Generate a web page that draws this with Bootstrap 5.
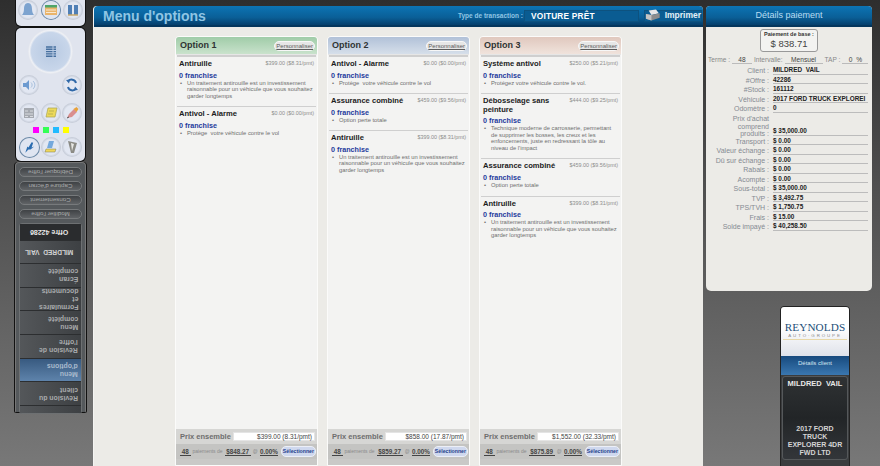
<!DOCTYPE html>
<html lang="fr">
<head>
<meta charset="UTF-8" />
<meta name="viewport" content="width=device-width, initial-scale=1" />
<title>Menu d'options</title>
<link rel="stylesheet" href="https://cdn.jsdelivr.net/npm/bootstrap@5.3.0/dist/css/bootstrap.min.css" />
<style>
  html, body { height: 466px; overflow: hidden; }
  body { background: linear-gradient(180deg, #2e2e2e 0, #4f4f4f 40%, #787878 100%); font-family: "Liberation Sans", Arial, sans-serif; }
  .page-wrap { width: 880px; height: 466px; overflow: hidden; }

  /* left rail */
  .rail { width: 71px; margin-left: 15px; margin-right: 7px; flex: none; }
  .rail-top { height: 26px; background: #e0e4ee; border-radius: 0 0 5px 5px; margin: 0 1px 2px; padding: 0 2px; box-shadow: 0 0 0 1px #111; }
  .rail-tools { height: 133px; background: #e0e4ee; border-radius: 5px; margin: 0 1px; padding: 1px 2px 0; box-shadow: 0 0 0 1px #111; }
  .ring { width: 20px; height: 20px; border-radius: 50%; background: radial-gradient(circle, #e2e7f2 52%, #c6ccd8 68%, #b4bbc8 88%, #eceef3 100%); flex: none; }
  .ring svg { display: block; width: 100%; height: 100%; }
  .ring-on { background: radial-gradient(circle, #dfe5f1 60%, #5f7f9f 68%, #4f6f91 88%, #c9d1dd 100%); }
  .ring-big { width: 45px; height: 45px; background: radial-gradient(circle, #b7c9e2 0, #c8d6ea 60%, #eef0f5 66%, #c6cbd6 84%, #f2f3f6 94%, #c9ccd3 100%); }
  .swatch { width: 6px; height: 6px; }
  .rail-dark { height: 251px; margin-top: 1px; padding: 4px 3px 3px; background: #55595c; border: 1px solid #777; border-bottom: 1px solid #111; box-shadow: 1px 0 0 #111, -1px 0 0 #111; border-radius: 4px 4px 2px 2px; }
  .pill-btn { height: 10px; margin-bottom: 4px; border-radius: 5px; background: linear-gradient(0deg, #606366, #3f4245); border: 1px solid #777a7c; color: #a9abac; font-size: 6.2px; line-height: 8px; text-align: center; white-space: nowrap; }
  .pill-btn span, .nav-cell span { display: block; transform: rotate(180deg); }
  .nav-stack { margin-top: 1px; background: #46494c; border-radius: 3px; border: 1px solid #6d7072; }
  .nav-cell { border-bottom: 1px solid #2c2e30; background: linear-gradient(90deg, #54575a, #3d4043); color: #a8aaac; font-size: 6.9px; font-weight: bold; line-height: 8px; padding: 0 3px 0 2px; display: flex; align-items: center; white-space: nowrap; }
  .nav-cell span { margin-left: auto; }
  .nav-offer { height: 17px; background: #2a2c2e; color: #e6e6e6; font-size: 7px; }
  .nav-offer span { margin-right: 10px; }
  .nav-name { height: 23px; color: #d2d2d2; font-size: 6.6px; }
  .nav-name span { margin-right: 5px; }
  .nav-h24 { height: 23.7px; }
  .nav-active { background: linear-gradient(180deg, #385a80, #5e83ab); color: #a9bacd; }
  .nav-end { height: 7px; border-bottom: 0; }

  /* main panel */
  .main-panel { width: 610px; flex: none; margin-top: 6px; background: #ecebe7; border-left: 1px solid #f4f4f2; border-radius: 4px 4px 0 0; }
  .blue-bar { height: 21px; border-radius: 4px 4px 0 0; background: linear-gradient(180deg, #0c74b4 0, #0a5f97 60%, #053f6c 100%); border-bottom: 2px solid #04365d; }
  .bar-title { margin-left: 9px; color: #8fc5e4; font-size: 14px; font-weight: bold; line-height: 20px; width: 355px; }
  .bar-type { color: #8fc5e4; font-size: 6.5px; font-weight: bold; width: 66px; white-space: nowrap; }
  .bar-field { width: 115px; height: 12px; border: 1px solid #0d527f; background: #0a5c92; color: #fff; font-size: 8.3px; font-weight: bold; letter-spacing: .2px; line-height: 10px; padding-left: 6px; margin-right: 5px; }
  .bar-print { width: 58px; height: 12px; border: 1px solid #0d527f; background: #0a5c92; color: #e4f0f7; font-size: 8.5px; font-weight: bold; }

  .option-wrap { padding: 9px 0 0 81px; gap: 9px; }
  .opt-col { width: 143px; height: 430px; background: #f3f3f2; border: 1px solid #fbfbfa; border-radius: 4px 4px 0 0; }
  .opt-head { height: 18px; padding: 0 2px 0 4px; border-bottom: 1px solid #e6e6e6; border-radius: 3px 3px 0 0; }
  .head-green { background: linear-gradient(180deg, #a0cca8, #c9e2cc); }
  .head-blue { background: linear-gradient(180deg, #b1c1d8, #d6dfea); }
  .head-rose { background: linear-gradient(180deg, #e0c8be, #f0e3dc); }
  .opt-title { font-size: 9px; font-weight: bold; color: #2f3333; }
  .btn-perso { font-size: 6px; color: #5c5c5c; background: #e6e6e6; border: 1px solid #f7f7f7; border-radius: 5px; padding: 0 1px; line-height: 8px; text-decoration: underline; }
  .opt-list { flex: 1 1 auto; }
  .opt-item { border-top: 1px solid #cfcfcf; margin: 0 1px; padding: 2px 2px 7px; }
  .opt-list .opt-item:first-child { border-top-width: 2px; }
  .item-name { font-size: 7.6px; line-height: 8.5px; font-weight: bold; color: #1c1c1c; max-width: 82px; padding-top: 1px; }
  .item-price { font-size: 5.4px; color: #8c8c8c; white-space: nowrap; line-height: 9px; }
  .item-fr { font-size: 7.2px; font-weight: bold; color: #1f3a9c; line-height: 8px; margin-top: 3px; }
  .item-txt { font-size: 5.8px; color: #6e6e6e; line-height: 6.6px; margin: 0; padding: 0 1px 0 8px; position: relative; }
  .item-txt::before { content: "•"; position: absolute; left: 1px; }
  .opt-foot { flex: none; height: 36px; background: #c9c9c7; }
  .foot-top { height: 15px; background: #d6d6d4; padding: 0 2px 0 4px; }
  .foot-label { font-size: 7.5px; font-weight: bold; color: #6e6e6e; white-space: nowrap; width: 53px; }
  .foot-val { flex: 1 1 auto; height: 9px; background: #fff; border: 1px solid #e4e4e4; font-size: 6.5px; line-height: 7px; color: #444; text-align: right; padding-right: 2px; white-space: nowrap; }
  .foot-pay { height: 15px; background: #c4c4c2; padding: 0 1px 0 4px; font-size: 5px; color: #8a8a8a; white-space: nowrap; gap: 2px; }
  .foot-pay b { color: #444; font-size: 6.3px; font-weight: bold; border-bottom: 1px solid #444; line-height: 7px; }
  .btn-pick { margin-left: auto; font-size: 5.2px; font-weight: bold; color: #24408c; background: #cfd8ee; border: 1px solid #eceff7; border-radius: 5px; padding: 0 1px; line-height: 9px; }

  /* right panel */
  .right-col { width: 166px; flex: none; margin-left: 3px; }
  .pay-panel { margin-top: 6px; height: 285px; flex: none; background: #ecebe7; border-radius: 4px 4px 5px 5px; }
  .pay-head { height: 21px; background: linear-gradient(180deg, #0c74b4 0, #0a5f97 60%, #053f6c 100%); border-bottom: 2px solid #04365d; border-radius: 4px 4px 0 0; color: #b9ddf2; font-size: 9px; line-height: 19px; text-align: center; }
  .base-box { width: 58px; height: 23px; margin: 2px auto 3px; border: 1px solid #999; border-radius: 3px; background: #f3f3f1; text-align: center; color: #333; }
  .base-box div { font-size: 5.5px; font-weight: bold; line-height: 7px; padding-top: 1px; }
  .base-box p { font-size: 9.5px; line-height: 11px; margin: 0; color: #444; }
  .term-row { font-size: 6.6px; color: #888; white-space: nowrap; padding-left: 2px; height: 10px; gap: 2px; }
  .term-row b { font-weight: normal; color: #444; border-bottom: 1px solid #bbb; text-align: center; display: block; line-height: 7px; }
  .pay-row { display: flex; align-items: flex-end; height: 9.5px; }
  .pay-lab { width: 67px; text-align: right; font-size: 7px; color: #858a92; line-height: 7.5px; padding-right: 4px; flex: none; white-space: nowrap; }
  .pay-val { width: 95px; flex: none; font-size: 6.4px; line-height: 7.4px; font-weight: bold; color: #222; border-bottom: 1px solid #bcbcbc; white-space: nowrap; }
  .pay-tall { height: 23px; }
  .pay-tall .pay-lab { margin-bottom: -2px; }

  .client-box { width: 70px; margin: 15px 0 0 74px; height: 170px; background: #3a3c3e; border-radius: 4px 4px 0 0; border: 1px solid #222; flex: none; }
  .logo-area { height: 49px; background: linear-gradient(180deg, #fff 40%, #dfe2ea 100%); text-align: center; border-radius: 3px 3px 0 0; padding-top: 15px; }
  .logo-name { font-family: "Liberation Serif", serif; font-size: 11.2px; line-height: 11px; color: #1d4f79; letter-spacing: .1px; }
  .logo-sub { font-size: 4.4px; line-height: 6px; color: #8a8a8a; letter-spacing: 1.9px; border-bottom: 1px solid #e8d8a8; margin: 0 2px; white-space: nowrap; }
  .detail-head { height: 19px; background: linear-gradient(180deg, #174a7e, #3a77b0); color: #d6e4f0; font-size: 6px; text-align: center; line-height: 15px; }
  .client-card { height: 84px; margin: 1px 1px 0; background: linear-gradient(180deg, #2f3234, #222527 50%, #33363a 100%); border: 1px solid #55585a; border-radius: 3px; color: #e6e6e6; font-weight: bold; text-align: center; }
  .client-name { font-size: 7.5px; line-height: 10px; padding-top: 2px; color: #e8e8e8; white-space: nowrap; }
  .client-car { font-size: 7px; line-height: 8px; padding-top: 36px; color: #d4d4d4; white-space: nowrap; }
</style>
</head>
<body>
<div class="page-wrap d-flex">

  <!-- left rail -->
  <div class="rail">
    <div class="rail-top d-flex justify-content-between align-items-start">
      <div class="ring"><svg viewBox="0 0 20 20"><path d="M10 3c-3 0-4 3-4 6 0 3-1 5-2 6h12c-1-1-2-3-2-6 0-3-1-6-4-6z" fill="#7da3cf" /></svg></div>
      <div class="ring ring-on"><svg viewBox="0 0 20 20"><rect x="4" y="5" width="12" height="10" fill="#e9b46b" /><rect x="4" y="5" width="12" height="2.5" fill="#4fa56a" /><path d="M5 10h10M5 12.5h10" stroke="#fff" stroke-width=".7" /></svg></div>
      <div class="ring"><svg viewBox="0 0 20 20"><path d="M5 5h4v10H5zM11 5h4v10h-4z" fill="#4f7fb5" /><path d="M5 15h10" stroke="#c9a86a" stroke-width="1.5" /></svg></div>
    </div>
    <div class="rail-tools">
      <div class="d-flex justify-content-center"><div class="ring ring-big"><svg viewBox="0 0 45 45"><path d="M18 18h6.500M18 20.300h6.500M18 22.600h6.500M18 24.900h6.500M18 27.200h6.500M25.500 18h2.500M25.500 20.300h2.500M25.500 22.600h2.500M25.500 24.900h2.500M25.500 27.200h2.500" stroke="#47709f" stroke-width="1.4" /></svg></div></div>
      <div class="d-flex justify-content-between" style="padding:0 1px;margin-top:1px">
        <div class="ring"><svg viewBox="0 0 20 20"><path d="M4 8h3l3-3v10l-3-3H4z" fill="#6c9ad0" /><path d="M12 7.500c1.500 1.500 1.500 3.500 0 5M14 6c2.500 2.500 2.500 5.500 0 8" stroke="#a8c0dd" fill="none" /></svg></div>
        <div class="ring"><svg viewBox="0 0 20 20"><path d="M14 8a4.500 4.500 0 0 0-8-1.500M6 12a4.500 4.500 0 0 0 8 1.500" stroke="#2f68a8" stroke-width="2" fill="none" /><path d="M4 5l4-.5-1 4zM16 15l-4 .5 1-4z" fill="#2f68a8" /></svg></div>
      </div>
      <div class="d-flex justify-content-between" style="padding:0 1px;margin-top:8px">
        <div class="ring"><svg viewBox="0 0 20 20"><rect x="5" y="5" width="10" height="10" fill="#a5a9b0" /><path d="M6 8h3M11 8h3M6 11h8M6 13.500h3M11 13.500h3" stroke="#e6e8ec" stroke-width=".8" /></svg></div>
        <div class="ring"><svg viewBox="0 0 20 20"><path d="M7 5h9l-2 9H5z" fill="#ecd95a" stroke="#a9a552" stroke-width=".7" /><path d="M8 8h5M7 11h5" stroke="#a9a552" stroke-width=".7" /></svg></div>
        <div class="ring"><svg viewBox="0 0 20 20"><path d="M5 15l2-4 5-5 3 3-5 5z" fill="#d98f8f" /><path d="M11.500 6l3-2 2 2-2 3z" fill="#e8a23a" /><path d="M5 15l2-1" stroke="#555" /></svg></div>
      </div>
      <div class="d-flex justify-content-center gap-1" style="margin-top:4px">
        <div class="swatch" style="background:#f0f"></div>
        <div class="swatch" style="background:#3f5"></div>
        <div class="swatch" style="background:#2bf"></div>
        <div class="swatch" style="background:#ff0"></div>
      </div>
      <div class="d-flex justify-content-between" style="margin-top:4px;padding:0 1px">
        <div class="ring ring-on" style="width:21px;height:21px"><svg viewBox="0 0 20 20"><path d="M6 15l2-6 1 1 3-5 1.500.5-1.500 4.500 2.500-1-3.500 3-2 0z" fill="#2a6cb0" /></svg></div>
        <div class="ring"><svg viewBox="0 0 20 20"><path d="M8 4h5l-2 7H6z" fill="#74a8dc" /><path d="M5 12h10l-1 3H4z" fill="#f0d75a" stroke="#7a7a5a" stroke-width=".5" /></svg></div>
        <div class="ring"><svg viewBox="0 0 20 20"><path d="M6 4l9 2-3 10H9z" fill="#8b8b85" /><path d="M9 6l3 1-2 7z" fill="#e8e8e4" /></svg></div>
      </div>
    </div>
    <div class="rail-dark">
      <div class="pill-btn"><span>Débloquer l'offre</span></div>
      <div class="pill-btn"><span>Capture d'écran</span></div>
      <div class="pill-btn"><span>Consentement</span></div>
      <div class="pill-btn"><span>Modifier l'offre</span></div>
      <div class="nav-stack">
        <div class="nav-cell nav-offer"><span>Offre 42286</span></div>
        <div class="nav-cell nav-name"><span>MILDRED&nbsp; VAIL</span></div>
        <div class="nav-cell nav-h24"><span>Écran<br>complété</span></div>
        <div class="nav-cell nav-h24"><span>Formulaires<br>et<br>documents</span></div>
        <div class="nav-cell nav-h24"><span>Menu<br>complété</span></div>
        <div class="nav-cell nav-h24"><span>Révision de<br>l'offre</span></div>
        <div class="nav-cell nav-h24 nav-active"><span>Menu<br>d'options</span></div>
        <div class="nav-cell nav-h24"><span>Révision du<br>client</span></div>
        <div class="nav-cell nav-end"></div>
      </div>
    </div>
  </div>

  <!-- main -->
  <div class="main-panel">
    <div class="blue-bar d-flex align-items-center">
      <div class="bar-title">Menu d'options</div>
      <div class="bar-type">Type de transaction :</div>
      <div class="bar-field">VOITURE PRÊT</div>
      <div class="bar-print d-flex align-items-center gap-1">
        <svg width="17" height="13" viewBox="0 0 17 13"><path d="M4 1l8-1 3 4-8 2z" fill="#e8e8e8" /><path d="M1 5l6 1 9-2v5l-9 3-6-2z" fill="#8d8d8d" /><path d="M1 5l6 1v6l-6-2z" fill="#c4c4c4" /></svg>
        <span>Imprimer</span>
      </div>
    </div>

    <div class="option-wrap d-flex">
      <!-- option 1 -->
      <div class="opt-col d-flex flex-column">
        <div class="opt-head head-green d-flex justify-content-between align-items-center">
          <span class="opt-title">Option 1</span><span class="btn-perso">Personnaliser</span>
        </div>
        <div class="opt-list">
          <div class="opt-item">
            <div class="d-flex justify-content-between"><div class="item-name">Antiruille</div><div class="item-price">$399.00 ($8.31/pmt)</div></div>
            <div class="item-fr">0 franchise</div>
            <div class="item-txt">Un traitement antirouille est un investissement raisonnable pour un véhicule que vous souhaitez garder longtemps</div>
          </div>
          <div class="opt-item">
            <div class="d-flex justify-content-between"><div class="item-name">Antivol - Alarme</div><div class="item-price">$0.00 ($0.00/pmt)</div></div>
            <div class="item-fr">0 franchise</div>
            <div class="item-txt">Protège&nbsp; votre véhicule contre le vol</div>
          </div>
        </div>
        <div class="opt-foot">
          <div class="foot-top d-flex align-items-center"><span class="foot-label">Prix ensemble</span><span class="foot-val">$399.00 (8.31/pmt)</span></div>
          <div class="foot-pay d-flex align-items-center"><b>&nbsp;48&nbsp;</b><span>paiements de</span><b>&nbsp;$848.27&nbsp;</b><span>@</span><b>0.00%</b><span class="btn-pick">Sélectionner</span></div>
        </div>
      </div>

      <!-- option 2 -->
      <div class="opt-col d-flex flex-column">
        <div class="opt-head head-blue d-flex justify-content-between align-items-center">
          <span class="opt-title">Option 2</span><span class="btn-perso">Personnaliser</span>
        </div>
        <div class="opt-list">
          <div class="opt-item">
            <div class="d-flex justify-content-between"><div class="item-name">Antivol - Alarme</div><div class="item-price">$0.00 ($0.00/pmt)</div></div>
            <div class="item-fr">0 franchise</div>
            <div class="item-txt">Protège&nbsp; votre véhicule contre le vol</div>
          </div>
          <div class="opt-item">
            <div class="d-flex justify-content-between"><div class="item-name">Assurance combiné</div><div class="item-price">$459.00 ($9.56/pmt)</div></div>
            <div class="item-fr">0 franchise</div>
            <div class="item-txt">Option perte totale</div>
          </div>
          <div class="opt-item">
            <div class="d-flex justify-content-between"><div class="item-name">Antiruille</div><div class="item-price">$399.00 ($8.31/pmt)</div></div>
            <div class="item-fr">0 franchise</div>
            <div class="item-txt">Un traitement antirouille est un investissement raisonnable pour un véhicule que vous souhaitez garder longtemps</div>
          </div>
        </div>
        <div class="opt-foot">
          <div class="foot-top d-flex align-items-center"><span class="foot-label">Prix ensemble</span><span class="foot-val">$858.00 (17.87/pmt)</span></div>
          <div class="foot-pay d-flex align-items-center"><b>&nbsp;48&nbsp;</b><span>paiements de</span><b>&nbsp;$859.27&nbsp;</b><span>@</span><b>0.00%</b><span class="btn-pick">Sélectionner</span></div>
        </div>
      </div>

      <!-- option 3 -->
      <div class="opt-col d-flex flex-column">
        <div class="opt-head head-rose d-flex justify-content-between align-items-center">
          <span class="opt-title">Option 3</span><span class="btn-perso">Personnaliser</span>
        </div>
        <div class="opt-list">
          <div class="opt-item">
            <div class="d-flex justify-content-between"><div class="item-name">Système antivol</div><div class="item-price">$250.00 ($5.21/pmt)</div></div>
            <div class="item-fr">0 franchise</div>
            <div class="item-txt">Protégez votre véhicule contre le vol.</div>
          </div>
          <div class="opt-item">
            <div class="d-flex justify-content-between"><div class="item-name">Débosselage sans peinture</div><div class="item-price">$444.00 ($9.25/pmt)</div></div>
            <div class="item-fr">0 franchise</div>
            <div class="item-txt">Technique moderne de carrosserie, permettant de supprimer les bosses, les creux et les enfoncements, juste en redressant la tôle au niveau de l'impact</div>
          </div>
          <div class="opt-item">
            <div class="d-flex justify-content-between"><div class="item-name">Assurance combiné</div><div class="item-price">$459.00 ($9.56/pmt)</div></div>
            <div class="item-fr">0 franchise</div>
            <div class="item-txt">Option perte totale</div>
          </div>
          <div class="opt-item">
            <div class="d-flex justify-content-between"><div class="item-name">Antiruille</div><div class="item-price">$399.00 ($8.31/pmt)</div></div>
            <div class="item-fr">0 franchise</div>
            <div class="item-txt">Un traitement antirouille est un investissement raisonnable pour un véhicule que vous souhaitez garder longtemps</div>
          </div>
        </div>
        <div class="opt-foot">
          <div class="foot-top d-flex align-items-center"><span class="foot-label">Prix ensemble</span><span class="foot-val">$1,552.00 (32.33/pmt)</span></div>
          <div class="foot-pay d-flex align-items-center"><b>&nbsp;48&nbsp;</b><span>paiements de</span><b>&nbsp;$875.89&nbsp;</b><span>@</span><b>0.00%</b><span class="btn-pick">Sélectionner</span></div>
        </div>
      </div>
    </div>
  </div>

  <!-- right -->
  <div class="right-col d-flex flex-column">
    <div class="pay-panel">
      <div class="pay-head">Détails paiement</div>
      <div class="base-box"><div>Paiement de base :</div><p>$ 838.71</p></div>
      <div class="term-row d-flex align-items-center">
        <span>Terme :</span><b style="width:20px">48</b>
        <span>Intervalle:</span><b style="width:38px">Mensuel</b>
        <span>TAP :</span><b style="width:26px">0&nbsp; %</b>
      </div>
      <div class="pay-row"><div class="pay-lab">Client :</div><div class="pay-val">MILDRED&nbsp; VAIL</div></div>
      <div class="pay-row"><div class="pay-lab">#Offre :</div><div class="pay-val">42286</div></div>
      <div class="pay-row"><div class="pay-lab">#Stock :</div><div class="pay-val">161112</div></div>
      <div class="pay-row"><div class="pay-lab">Véhicule :</div><div class="pay-val">2017 FORD TRUCK EXPLOREI</div></div>
      <div class="pay-row"><div class="pay-lab">Odomètre :</div><div class="pay-val">0</div></div>
      <div class="pay-row pay-tall"><div class="pay-lab">Prix d'achat<br>comprend<br>produits :</div><div class="pay-val">$ 35,000.00</div></div>
      <div class="pay-row"><div class="pay-lab">Transport :</div><div class="pay-val">$ 0.00</div></div>
      <div class="pay-row"><div class="pay-lab">Valeur échange :</div><div class="pay-val">$ 0.00</div></div>
      <div class="pay-row"><div class="pay-lab">Dû sur échange :</div><div class="pay-val">$ 0.00</div></div>
      <div class="pay-row"><div class="pay-lab">Rabais :</div><div class="pay-val">$ 0.00</div></div>
      <div class="pay-row"><div class="pay-lab">Acompte :</div><div class="pay-val">$ 0.00</div></div>
      <div class="pay-row"><div class="pay-lab">Sous-total :</div><div class="pay-val">$ 35,000.00</div></div>
      <div class="pay-row"><div class="pay-lab">TVP :</div><div class="pay-val">$ 3,492.75</div></div>
      <div class="pay-row"><div class="pay-lab">TPS/TVH :</div><div class="pay-val">$ 1,750.75</div></div>
      <div class="pay-row"><div class="pay-lab">Frais :</div><div class="pay-val">$ 15.00</div></div>
      <div class="pay-row"><div class="pay-lab">Solde impayé :</div><div class="pay-val">$ 40,258.50</div></div>
    </div>
    <div class="client-box">
      <div class="logo-area">
        <div class="logo-name">REYNOLDS</div>
        <div class="logo-sub">AUTO·GROUPE</div>
      </div>
      <div class="detail-head">Détails client</div>
      <div class="client-card">
        <div class="client-name">MILDRED&nbsp; VAIL</div>
        <div class="client-car">2017 FORD<br>TRUCK<br>EXPLORER 4DR<br>FWD LTD</div>
      </div>
    </div>
  </div>
</div>
<script src="https://cdn.jsdelivr.net/npm/bootstrap@5.3.0/dist/js/bootstrap.bundle.min.js"></script>
</body>
</html>
